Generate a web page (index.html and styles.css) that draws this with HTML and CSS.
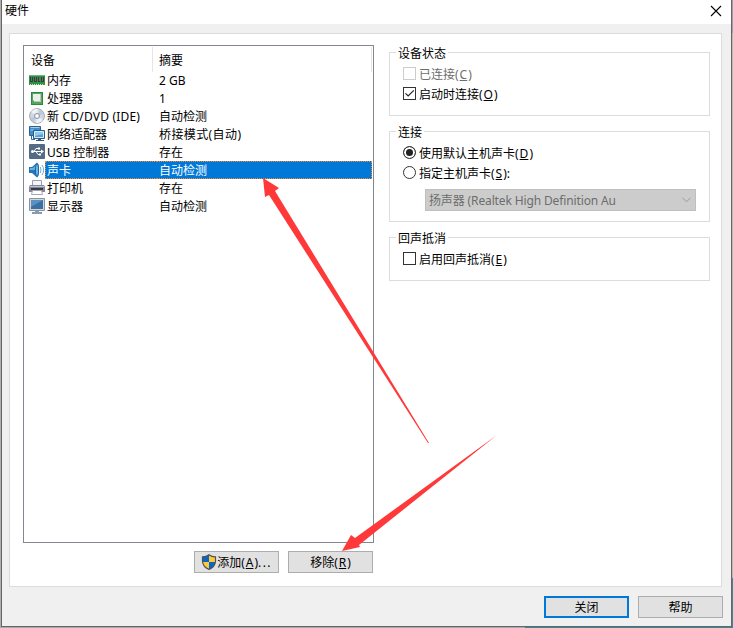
FILE: index.html
```
<!DOCTYPE html>
<html>
	<head>
		<meta charset="utf-8">
		<title>硬件</title>
		<link rel="stylesheet" href="styles.css">
	</head>
	<body>
		<div id="desk">
			<div id="win">
				<div id="title">
					<span>硬件</span>
					<svg id="close" width="12" height="12" viewBox="0 0 12 12"><path d="M1 1L11 11M11 1L1 11" stroke="#000" stroke-width="1.1" fill="none"/></svg>
				</div>
				<div id="panel">
					<div id="left">
						<div id="list">
							<div class="head"><span class="name">设备</span><span>摘要</span></div>
							<ul>
								<li>
									<svg class="icon" width="16" height="16" viewBox="0 0 16 16"><path d="M0 3H16V13H0Z" fill="#2d9147"/><path d="M0 3.5H16" stroke="#65bd70"/><path d="M1 5H4V10H1ZM5 5H8V10H5ZM9 5H11V10H9ZM12 5H15V10H12Z" fill="#35403b"/><path d="M2.5 5V9M6.5 5V9M10.5 5V9M13.5 5V9" stroke="#686f69"/><path d="M1 12.5H15" stroke="#d9e3a0" stroke-dasharray="1 1"/></svg>
									<span class="name">内存</span><span class="sum">2 GB</span>
								</li>
								<li>
									<svg class="icon" width="16" height="16" viewBox="0 0 16 16"><path d="M2 2H14V15H2Z" fill="#2a8a43"/><path d="M3 3H13V14H3Z" fill="#51a85b"/><path d="M4 4H12V12H6L4 10Z" fill="#eeefeb"/><path d="M5 11.5H12M11.5 4V12" stroke="#bfc4bd"/></svg>
									<span class="name">处理器</span><span class="sum">1</span>
								</li>
								<li>
									<svg class="icon" width="16" height="16" viewBox="0 0 16 16"><circle cx="8" cy="8" r="7.4" fill="#d1d9e3" stroke="#a1a7ad"/><path d="M8 8L2 4Q5 0 9 1ZM8 8L14 12Q11 16 7 15Z" fill="#edf2f8"/><path d="M8 8L11 2L15 6ZM8 8L1 10L4 14Z" fill="#bac9db"/><circle cx="8" cy="8" r="2.6" fill="#dfe4ea" stroke="#96a0ab"/><circle cx="8" cy="8" r="1.2" fill="#fff"/></svg>
									<span class="name cd">新 CD/DVD (IDE)</span><span class="sum">自动检测</span>
								</li>
								<li>
									<svg class="icon" width="16" height="16" viewBox="0 0 16 16"><path d="M.5 .5H11.5V9.5H.5Z" fill="#3c8ed0" stroke="#315f86"/><path d="M1.5 1.5H10.5M1.5 4H5" stroke="#9bd2f4"/><path d="M2.5 10V13.5H6" stroke="#46647d" fill="none"/><path d="M4.5 4.5H15.5V12.5H4.5Z" fill="#559fda" stroke="#2d5c87"/><path d="M5.5 5.5H14.5V11.5H5.5Z" fill="#559fda" stroke="#d5ecfa"/><path d="M6 6H14V8L6 10Z" fill="#91caef"/><path d="M9 13H12V14H15V15H7V14H9Z" fill="#40586f"/></svg>
									<span class="name">网络适配器</span><span class="sum wide">桥接模式(自动)</span>
								</li>
								<li>
									<svg class="icon" width="16" height="16" viewBox="0 0 16 16"><rect x="0" y="0" width="16" height="15" rx="1" fill="#546b86"/><path d="M3 7.5H13M5 7.5L7 4.5H9M7 7.5L9 10.5H11" stroke="#fff" fill="none"/><circle cx="3.5" cy="7.5" r="1.5" fill="#fff"/><path d="M12 5.5L15 7.5L12 9.5ZM9 3.5H11V5.5H9ZM10 9.5H12V11.5H10Z" fill="#fff"/></svg>
									<span class="name">USB 控制器</span><span class="sum">存在</span>
								</li>
								<li class="active">
									<svg class="icon" width="16" height="16" viewBox="0 0 16 16"><path d="M0 5L3 5L8 .5Q10 1 10 8Q10 15 8 15.5L3 11H0Z" fill="#2875b5"/><path d="M1 6H4L7 3V8H1Z" fill="#65b0e2"/><ellipse cx="8" cy="8" rx="1.6" ry="6.4" fill="#69b7e6" stroke="#1c609c"/><path d="M11.3 5Q12.7 8 11.3 11M13 3Q16.4 8 13 13" stroke="#6caeda" fill="none"/></svg>
									<span class="name">声卡</span><span class="sum">自动检测</span>
								</li>
								<li>
									<svg class="icon" width="16" height="16" viewBox="0 0 16 16"><path d="M3.5 .5H12.5V6H3.5Z" fill="#f4f5fa" stroke="#9d9dab"/><path d="M1 5H15L16 7V12H0V7Z" fill="#85869a"/><path d="M1 6.5H15" stroke="#c3c4d2"/><path d="M2 9H14" stroke="#363a4a" stroke-width="2"/><path d="M3.5 10.5H12.5L13.5 14.5H2.5Z" fill="#fff" stroke="#a6a7b5"/></svg>
									<span class="name">打印机</span><span class="sum">存在</span>
								</li>
								<li>
									<svg class="icon" width="16" height="16" viewBox="0 0 16 16"><path d="M.5 .5H15.5V12.5H.5Z" fill="#d1d6db" stroke="#8795a2"/><path d="M2 2H14V11H2Z" fill="#386fa5"/><path d="M2 2H14L2 9Z" fill="#5c91bf"/><path d="M6 13H10V14H13V16H3V14H6Z" fill="#8b9ba9"/></svg>
									<span class="name">显示器</span><span class="sum">自动检测</span>
								</li>
							</ul>
						</div>
						<div class="btns">
							<div class="btn add"><svg width="16" height="16" viewBox="0 0 16 16"><path d="M8 .7Q11 3 14.5 2.8V7.5Q14 13 8 15.4Q2 13 1.5 7.5V2.8Q5 3 8 .7Z" fill="#ffc83d"/><path d="M8 .7Q5 3 1.5 2.8V8H8ZM8 8V15.4Q14 13 14.5 8Z" fill="#0866c6"/><path d="M8 .7Q11 3 14.5 2.8V7.5Q14 13 8 15.4Q2 13 1.5 7.5V2.8Q5 3 8 .7Z" fill="none" stroke="#4b5358" stroke-width="1.2"/></svg><span>添加(<u>A</u>)<b>...</b></span></div>
							<div class="btn"><span>移除(<u>R</u>)</span></div>
						</div>
					</div>
					<div id="right">
						<div class="group g1">
							<span class="legend">设备状态</span>
							<div class="opt off"><i class="box"></i><span>已连接(<u>C</u>)</span></div>
							<div class="opt"><i class="box"><svg width="11" height="11" viewBox="0 0 11 11"><path d="M1.5 5.3L4.2 8L9.8 2.4" fill="none" stroke="#222" stroke-width="1.2"/></svg></i><span>启动时连接(<u>O</u>)</span></div>
						</div>
						<div class="group g2">
							<span class="legend">连接</span>
							<div class="opt"><i class="radio on"></i><span>使用默认主机声卡(<u>D</u>)</span></div>
							<div class="opt"><i class="radio"></i><span>指定主机声卡(<u>S</u>):</span></div>
							<div class="select"><span>扬声器 (Realtek High Definition Au</span><svg width="9" height="6" viewBox="0 0 9 6"><path d="M.5 .8L4.5 4.8L8.5 .8" fill="none" stroke="#9b9b9b"/></svg></div>
						</div>
						<div class="group g3">
							<span class="legend">回声抵消</span>
							<div class="opt"><i class="box"></i><span>启用回声抵消(<u>E</u>)</span></div>
						</div>
					</div>
				</div>
				<div id="foot">
					<div class="btn blue"><span>关闭</span></div>
					<div class="btn"><span>帮助</span></div>
				</div>
			</div>
			<svg id="arrows" width="733" height="628" viewBox="0 0 733 628">
				<path d="M263 178L279 188L275 191L429 443L428 443L269 195L265 197Z" fill="#ff3939"/>
				<path d="M342 551L351 535L355 538L497 435L359 545L360 547Z" fill="#ff3939"/>
			</svg>
		</div>
	</body>
</html>
```
FILE: styles.css
```
*{
	padding: 0;
	margin: 0;
	box-sizing: border-box;
}
body{
	font: 12px/18px "Noto Sans","Noto Sans CJK SC",sans-serif;
	color: #000;
	overflow: hidden;
}
svg{
	display: block;
	flex: none;
}
#desk{
	width: 733px;
	height: 628px;
	padding: 0 1px;
	position: relative;
	background: linear-gradient(90deg,#aaa 525px,#39899a 525px) 0 626px no-repeat,linear-gradient(#9a9fb3 33px,#b8b8b8 33px,#b8b8b8 578px,#39899a 578px) 732px 0 no-repeat,#b0b0b0;
}
#win{
	width: 731px;
	height: 627px;
	background: #f0f0f0;
	border: 1px solid #666;
	border-top: 0;
}
#title{
	height: 24px;
	padding: 0 9px 2px 3px;
	background: #fff;
	display: flex;
	justify-content: space-between;
	align-items: center;
}
#panel{
	width: 713px;
	height: 554px;
	margin: 9px 0 0 7px;
	padding: 11px 11px 0 13px;
	background: #fff;
	border: 1px solid #dcdcdc;
	display: flex;
	justify-content: space-between;
}
#left{
	width: 351px;
}
#list{
	height: 498px;
	border: 1px solid #828790;
}
.head{
	height: 25px;
	padding: 1px 1px 0 7px;
	line-height: 28px;
	display: flex;
}
.head .name{
	width: 122px;
	margin-right: 6px;
	border-right: 1px solid #e5e5e5;
}
.head span{
	height: 25px;
}
.head span:last-child{
	flex: 1;
	border-right: 1px solid #e5e5e5;
}
ul{
	list-style: none;
}
li{
	height: 18px;
	padding: 0 1px 0 5px;
	line-height: 20px;
	display: flex;
}
li .icon{
	margin-top: 1px;
}
li .name{
	width: 112px;
	padding-left: 2px;
	white-space: nowrap;
}
li .cd{
	letter-spacing: 0.2px;
}
li .sum{
	flex: 1;
	padding-left: 2px;
}
li .wide{
	letter-spacing: 0.4px;
}
li.active span{
	background: #0078d7;
	color: #fff;
	border-top: 1px dotted #ff8728;
	border-bottom: 1px dotted #ff8728;
	line-height: 18px;
}
li.active .name{
	border-left: 1px dotted #ff8728;
	padding-left: 1px;
}
li.active .sum{
	border-right: 1px dotted #ff8728;
}
.btns{
	padding-right: 1px;
	margin-top: 8px;
	display: flex;
	justify-content: flex-end;
	gap: 9px;
}
.btn{
	width: 85px;
	height: 22px;
	background: #e1e1e1;
	border: 1px solid #adadad;
	display: flex;
	justify-content: center;
	align-items: center;
}
.btn span{
	padding-top: 2px;
}
.btn.blue{
	border: 2px solid #0078d7;
}
.add b{
	font-weight: normal;
	letter-spacing: 1.4px;
}
u{
	margin: 0 1px;
	text-underline-offset: 1px;
}
#right{
	width: 321px;
	padding-top: 7px;
}
.group{
	border: 1px solid #dcdcdc;
	padding-left: 13px;
}
.g1{
	height: 64px;
	margin-bottom: 15px;
}
.g2{
	height: 91px;
	margin-bottom: 15px;
}
.g3{
	height: 44px;
}
.legend{
	display: block;
	width: fit-content;
	height: 18px;
	margin: -9px 0 0 -7px;
	padding: 0 2px;
	background: #fff;
	line-height: 20px;
}
.opt{
	height: 20px;
	display: flex;
	align-items: center;
}
.opt span{
	padding-top: 2px;
}
.legend + .opt{
	margin-top: 2px;
}
.g1 .box,.g3 .box{
	margin-bottom: 1px;
}
.box,.radio{
	width: 13px;
	height: 13px;
	margin-right: 3px;
	border: 1px solid #333;
	flex: none;
}
.radio{
	margin-bottom: 1px;
	border-radius: 50%;
}
.radio.on{
	background: #222;
	box-shadow: inset 0 0 0 2px #fff;
}
.off{
	color: #6d6d6d;
}
.off .box{
	border-color: #ccc;
}
.select{
	width: 271px;
	height: 22px;
	margin: 6px 0 0 22px;
	padding: 0 4px 0 3px;
	background: #ccc;
	border: 1px solid #bfbfbf;
	color: #6d6d6d;
	letter-spacing: -0.13px;
	display: flex;
	justify-content: space-between;
	align-items: center;
}
.select span{
	padding-top: 2px;
}
#foot{
	padding: 9px 8px 0 0;
	display: flex;
	justify-content: flex-end;
	gap: 9px;
}
#arrows{
	position: absolute;
	left: 0;
	top: 0;
}
```
